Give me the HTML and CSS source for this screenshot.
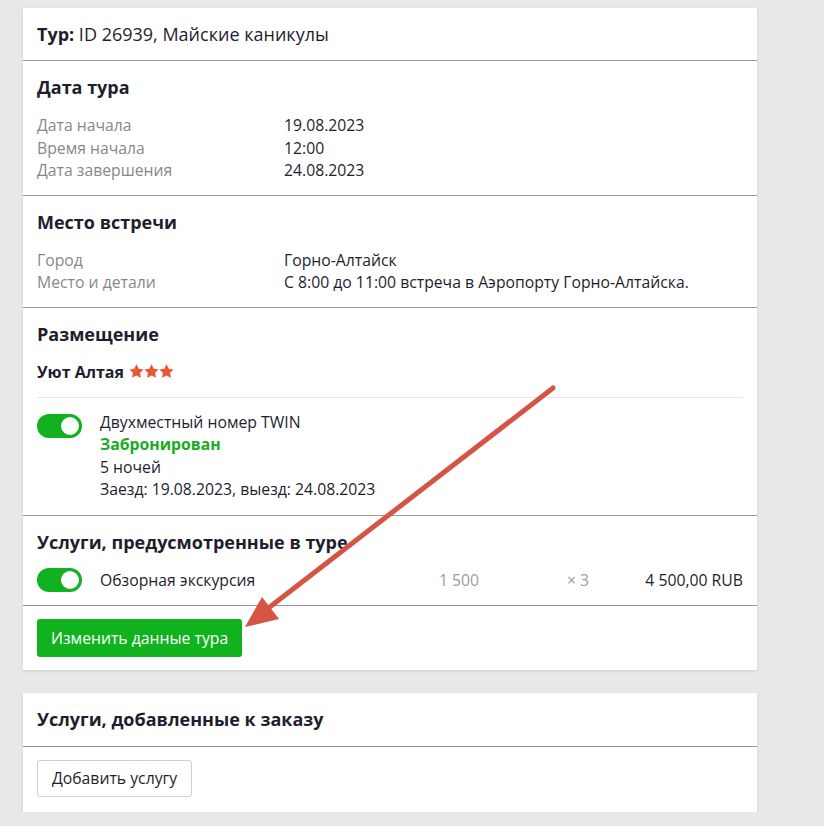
FILE: index.html
```html
<!DOCTYPE html>
<html lang="ru">
<head>
<meta charset="utf-8">
<link rel="stylesheet" href="styles.css">
</head>
<body>
<div class="page">
  <div class="card">
    <div class="section header">
      <b>Тур:</b> ID 26939, Майские каникулы
    </div>
    <div class="section">
      <h2 class="title">Дата тура</h2>
      <div class="props">
        <div class="label">Дата начала</div><div class="value">19.08.2023</div>
        <div class="label">Время начала</div><div class="value">12:00</div>
        <div class="label">Дата завершения</div><div class="value">24.08.2023</div>
      </div>
    </div>
    <div class="section">
      <h2 class="title">Место встречи</h2>
      <div class="props">
        <div class="label">Город</div><div class="value">Горно-Алтайск</div>
        <div class="label">Место и детали</div><div class="value">С 8:00 до 11:00 встреча в Аэропорту Горно-Алтайска.</div>
      </div>
    </div>
    <div class="section">
      <h2 class="title">Размещение</h2>
      <div class="hotel">Уют Алтая
        <span class="stars">
          <svg viewBox="0 0 24 24" class="star"><polygon points="12,0.5 15.6,7.4 23.3,8.6 17.8,14.1 19.1,21.8 12,18.3 4.9,21.8 6.2,14.1 0.7,8.6 8.4,7.4"/></svg><svg viewBox="0 0 24 24" class="star"><polygon points="12,0.5 15.6,7.4 23.3,8.6 17.8,14.1 19.1,21.8 12,18.3 4.9,21.8 6.2,14.1 0.7,8.6 8.4,7.4"/></svg><svg viewBox="0 0 24 24" class="star"><polygon points="12,0.5 15.6,7.4 23.3,8.6 17.8,14.1 19.1,21.8 12,18.3 4.9,21.8 6.2,14.1 0.7,8.6 8.4,7.4"/></svg>
        </span>
      </div>
      <div class="room">
        <span class="toggle"><span class="knob"></span></span>
        <div class="room-info">
          <div>Двухместный номер TWIN</div>
          <div class="booked">Забронирован</div>
          <div>5 ночей</div>
          <div>Заезд: 19.08.2023, выезд: 24.08.2023</div>
        </div>
      </div>
    </div>
    <div class="section services">
      <h2 class="title">Услуги, предусмотренные в туре</h2>
      <div class="service-row">
        <span class="toggle"><span class="knob"></span></span>
        <span class="svc-name">Обзорная экскурсия</span>
        <span class="svc-price">1 500</span>
        <span class="svc-qty">× 3</span>
        <span class="svc-total">4 500,00 RUB</span>
      </div>
    </div>
    <div class="section actions">
      <button class="btn-primary">Изменить данные тура</button>
    </div>
  </div>

  <div class="card">
    <div class="section card-head">
      <h2 class="title">Услуги, добавленные к заказу</h2>
    </div>
    <div class="section actions last">
      <button class="btn-default">Добавить услугу</button>
    </div>
  </div>
</div>

<svg class="arrow" width="824" height="826" viewBox="0 0 824 826">
  <line x1="553" y1="388" x2="262" y2="613" stroke="#d65444" stroke-width="5" stroke-linecap="round"/>
  <polygon points="245,627 262,597 279,619" fill="#d65444"/>
</svg>
</body>
</html>
```

FILE: styles.css
```css
* { box-sizing: border-box; }
html, body {
  margin: 0;
  padding: 0;
  background: #e8e8ea;
  font-family: "Open Sans", "Noto Sans", sans-serif;
  color: #1e1e2e;
  font-size: 15.75px;
}
.page {
  width: 734px;
  margin-left: 23px;
  padding-top: 8px;
  display: flex;
  flex-direction: column;
  gap: 23px;
}
.card {
  background: #fff;
  box-shadow: 0 1px 3px rgba(0,0,0,0.12);
}
.section {
  padding: 14px 14px 13px;
  border-bottom: 1px solid #98979c;
}
.section:last-child { border-bottom: none; }
.header {
  font-size: 18px;
  line-height: 24px;
  padding: 14px 14px 14px;
}
.card-head { padding: 14px 14px 15px; }
.title {
  margin: 0;
  font-size: 18px;
  line-height: 24px;
  font-weight: 700;
  color: #1e1e2e;
}
.props {
  margin-top: 15px;
  display: grid;
  grid-template-columns: 247px 1fr;
  line-height: 22.5px;
}
.label { color: #8a8886; }
.value { color: #1e1e2e; }
.hotel {
  margin-top: 15px;
  font-weight: 700;
  font-size: 16px;
  line-height: 22px;
  display: flex;
  align-items: center;
  gap: 5px;
  padding-bottom: 14px;
  border-bottom: 1px solid #e6e6e6;
}
.stars { display: inline-flex; gap: 0; }
.star { width: 15px; height: 15px; fill: #e85a32; display: block; }
.room {
  display: flex;
  padding-top: 13px;
  padding-bottom: 1px;
}
.toggle {
  flex: none;
  width: 45px;
  height: 24px;
  border-radius: 12px;
  background: #12b120;
  position: relative;
  margin-right: 18px;
}
.room .toggle { margin-top: 3px; }
.knob {
  position: absolute;
  right: 3px;
  top: 3px;
  width: 18px;
  height: 18px;
  border-radius: 50%;
  background: #fff;
}
.room-info { line-height: 22.5px; }
.booked { color: #1aab22; font-weight: 700; }
.service-row {
  margin-top: 14px;
  display: grid;
  grid-template-columns: 63px 279px 100px 110px 154px;
  align-items: center;
  line-height: 24px;
}
.svc-price { text-align: right; color: #9a9ca4; }
.svc-qty { text-align: right; color: #9a9ca4; }
.svc-total { text-align: right; }
.actions { padding: 13px 14px; }
.actions.last { padding: 13px 14px 15px; }
.btn-primary {
  font-family: inherit;
  font-size: 15.75px;
  color: #fff;
  background: #10b21e;
  border: none;
  border-radius: 3px;
  height: 38px;
  padding: 0 14px;
  display: block;
}
.btn-default {
  font-family: inherit;
  font-size: 15.75px;
  color: #1e1e2e;
  background: #fff;
  border: 1px solid #cfcfd2;
  border-radius: 3px;
  height: 37px;
  padding: 0 14px;
  display: block;
}
.arrow {
  position: absolute;
  left: 0;
  top: 0;
  pointer-events: none;
}
```
